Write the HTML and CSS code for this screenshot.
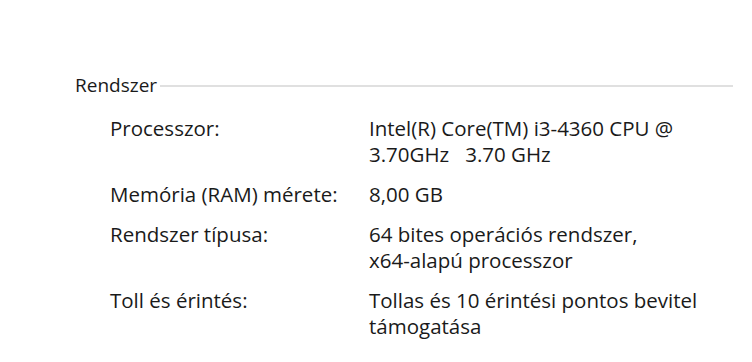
FILE: index.html
```html
<!DOCTYPE html>
<html lang="hu">
<head>
    <meta charset="UTF-8">
    <title>Rendszer</title>
    <link rel="stylesheet" href="styles.css">
</head>
<body>
    <div class="panel">
        <div class="group-title">
            <span>Rendszer</span>
            <div class="rule"></div>
        </div>

        <div class="info">
            <div class="label">Processzor:</div>
            <div class="value">Intel(R) Core(TM) i3-4360 CPU @<br>3.70GHz&nbsp;&nbsp; 3.70 GHz</div>

            <div class="label">Memória (RAM) mérete:</div>
            <div class="value">8,00 GB</div>

            <div class="label">Rendszer típusa:</div>
            <div class="value">64 bites operációs rendszer,<br>x64-alapú processzor</div>

            <div class="label">Toll és érintés:</div>
            <div class="value">Tollas és 10 érintési pontos bevitel<br>támogatása</div>
        </div>
    </div>
</body>
</html>
```

FILE: styles.css
```css
body {
    margin: 0;
    background: #fff;
    color: #1a1a1a;
    font-family: "Open Sans", sans-serif;
}

.panel {
    padding: 72px 19px 0 75px;
}

.group-title {
    display: flex;
    align-items: center;
    gap: 3px;
    font-size: 19px;
    line-height: 26px;
}

.rule {
    flex: 1;
    height: 2px;
    margin-top: 2px;
    background: #e0e0e0;
}

.info {
    display: grid;
    grid-template-columns: 259px 1fr;
    row-gap: 14px;
    margin-top: 17px;
    padding-left: 35px;
    font-size: 20.5px;
    line-height: 26px;
    white-space: nowrap;
}
```
